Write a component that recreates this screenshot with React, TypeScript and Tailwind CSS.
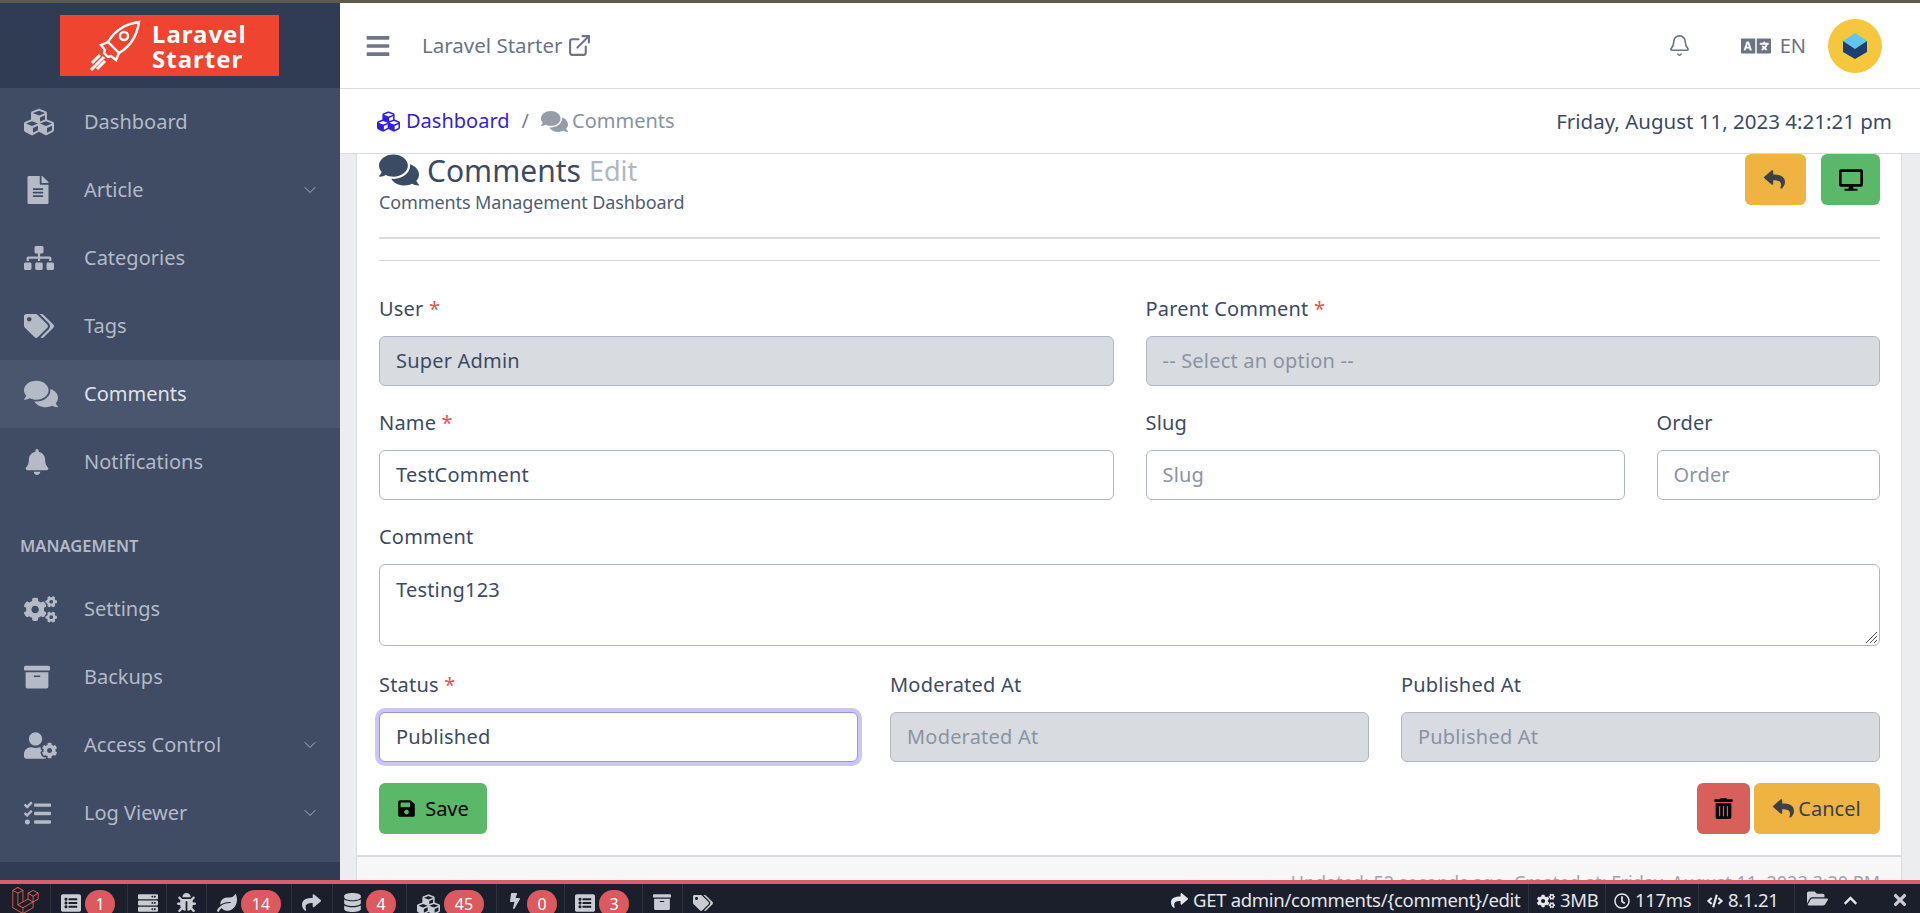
import { Bell, ChevronDown, ExternalLink } from "lucide-react";
import {
  FaArchive,
  FaBars,
  FaBell,
  FaBolt,
  FaBug,
  FaChevronUp,
  FaCode,
  FaCogs,
  FaComments,
  FaCubes,
  FaDatabase,
  FaDesktop,
  FaFileAlt,
  FaFolderOpen,
  FaLanguage,
  FaLaravel,
  FaLeaf,
  FaListAlt,
  FaRegClock,
  FaReply,
  FaSave,
  FaServer,
  FaShare,
  FaSitemap,
  FaTags,
  FaTasks,
  FaTimes,
  FaTrashAlt,
  FaUserCog,
} from "react-icons/fa";

const font = "font-['Noto_Sans',sans-serif]";

function NavItem({ icon, label, active, caret }: { icon: React.ReactNode; label: string; active?: boolean; caret?: boolean }) {
  return (
    <div className={`flex h-[68px] items-center pl-6 pr-[20px] text-[20px] text-[#b4bac6] ${active ? "bg-[#4a566e] text-[#dfe2e8]" : ""}`}>
      <span className="flex w-[60px] shrink-0 text-[#b4bac6]">{icon}</span>
      <span className="flex-1">{label}</span>
      {caret && <ChevronDown size={20} strokeWidth={1.1} />}
    </div>
  );
}

function Sidebar() {
  return (
    <aside className="flex w-[340px] shrink-0 flex-col bg-[#3f4c64]">
      <div className="flex h-[85px] shrink-0 items-start justify-start bg-[#303c54] pl-[60px] pt-3">
        <div className="flex h-[61px] w-[219px] items-center bg-[#ee4430] pl-[29px] text-white">
          <svg viewBox="0 0 52 52" className="h-[52px] w-[52px] shrink-0" fill="none" stroke="#fff" strokeWidth="2.4">
            <path d="M50 2c-14 2-24 8-31 20l-7 3 4 5-1 3 4 4 3-1 5 4 3-7C42 26 48 16 50 2z" />
            <path d="M19 22l11 11" />
            <circle cx="35" cy="16" r="4" />
            <path d="M2 50l13-13M8 49l8-8M3 43l8-8" strokeWidth="3" />
          </svg>
          <div className="ml-[11px] text-[24px] font-bold leading-[25px] tracking-[1px]">
            <div>Laravel</div>
            <div>Starter</div>
          </div>
        </div>
      </div>
      <NavItem icon={<FaCubes size={30} />} label="Dashboard" />
      <NavItem icon={<FaFileAlt size={28} />} label="Article" caret />
      <NavItem icon={<FaSitemap size={30} />} label="Categories" />
      <NavItem icon={<FaTags size={30} />} label="Tags" />
      <NavItem icon={<FaComments size={34} />} label="Comments" active />
      <NavItem icon={<FaBell size={26} />} label="Notifications" />
      <div className="flex h-[79px] shrink-0 items-center pl-5 pt-[22px] text-[16.5px] font-semibold text-[#b4bac6]">MANAGEMENT</div>
      <NavItem icon={<FaCogs size={33} />} label="Settings" />
      <NavItem icon={<FaArchive size={26} />} label="Backups" />
      <NavItem icon={<FaUserCog size={33} />} label="Access Control" caret />
      <NavItem icon={<FaTasks size={27} />} label="Log Viewer" caret />
      <div className="mt-auto h-[18px] bg-[#303c54]" />
    </aside>
  );
}

function Header() {
  return (
    <>
      <header className="flex h-[86px] shrink-0 items-center border-b border-[#d8dbe0] bg-white pl-[25px] pr-[38px] text-[#6b7385]">
        <FaBars size={26} className="text-[#6f7685]" />
        <span className="ml-[31px] text-[20.5px]">Laravel Starter</span>
        <ExternalLink size={25} className="ml-[5px]" />
        <Bell size={23} className="ml-auto" strokeWidth={1.7} />
        <FaLanguage size={30} className="ml-[50px]" />
        <span className="ml-[9px] text-[20px]">EN</span>
        <div className="ml-[22px] flex h-[54px] w-[54px] items-center justify-center rounded-full bg-[#f5c73d]">
          <svg viewBox="0 0 24 26" className="h-[28px] w-[24px]">
            <polygon points="12,0 24,8 12,16 0,8" fill="#5cc6f4" />
            <polygon points="0,8 12,16 24,8 24,19 12,26 0,19" fill="#1b3f6e" />
          </svg>
        </div>
      </header>
      <div className="flex h-[65px] shrink-0 items-center justify-between border-b border-[#d8dbe0] bg-white pl-[37px] pr-[28px] text-[20px]">
        <div className="flex items-center">
          <FaCubes size={23} className="text-[#321fdb]" />
          <span className="ml-[6px] text-[#321fdb]">Dashboard</span>
          <span className="ml-[12px] text-[#768192]">/</span>
          <FaComments size={27} className="ml-[12px] text-[#969ca8]" />
          <span className="ml-[4px] text-[#8a93a2]">Comments</span>
        </div>
        <span className="text-[20.5px] text-[#3c4b64]">Friday, August 11, 2023 4:21:21 pm</span>
      </div>
    </>
  );
}

function Field({ label, required, span, value, placeholder, disabled, focused }: { label: string; required?: boolean; span: string; value?: string; placeholder?: string; disabled?: boolean; focused?: boolean }) {
  return (
    <div className={span}>
      <label className="mb-[15px] block h-[24px] text-[20px] leading-[24px] tracking-[0.2px] text-[#3c4b64]">
        {label} {required && <span className="text-[#e55353]">*</span>}
      </label>
      <div
        className={`flex h-[50px] items-center rounded-[6px] border px-4 text-[20px] tracking-[0.2px] ${
          focused ? "border-[#998fed] bg-white shadow-[0_0_0_4px_#cbc6f3]" : disabled ? "border-[#b1b7c1] bg-[#d8dbe0]" : "border-[#b1b7c1] bg-white"
        } ${value ? "text-[#3c4b64]" : "text-[#8a93a2]"}`}
      >
        {value ?? placeholder}
      </div>
    </div>
  );
}

function CommentForm() {
  return (
    <div className="grid grid-cols-12 gap-x-8 gap-y-[25px]">
      <Field span="col-span-6" label="User" required value="Super Admin" disabled />
      <Field span="col-span-6" label="Parent Comment" required placeholder="-- Select an option --" disabled />
      <Field span="col-span-6" label="Name" required value="TestComment" />
      <Field span="col-span-4" label="Slug" placeholder="Slug" />
      <Field span="col-span-2" label="Order" placeholder="Order" />
      <div className="col-span-12 mb-[2px]">
        <label className="mb-[15px] block h-[24px] text-[20px] leading-[24px] tracking-[0.2px] text-[#3c4b64]">Comment</label>
        <div className="relative h-[82px] rounded-[6px] border border-[#b1b7c1] bg-white px-4 pt-[10px] text-[20px] tracking-[0.2px] text-[#3c4b64]">
          Testing123
          <svg viewBox="0 0 12 12" className="absolute bottom-[2px] right-[2px] h-3 w-3" stroke="#555" strokeWidth="1">
            <path d="M12 1L1 12M12 5L5 12M12 9L9 12" />
          </svg>
        </div>
      </div>
      <Field span="col-span-4" label="Status" required value="Published" focused />
      <Field span="col-span-4" label="Moderated At" placeholder="Moderated At" disabled />
      <Field span="col-span-4" label="Published At" placeholder="Published At" disabled />
    </div>
  );
}

function Content() {
  return (
    <div className="min-h-0 flex-1 overflow-hidden bg-[#ebedef] pl-4 pr-[18px]">
      <div className="-mt-[20px] border border-[#d8dbe0] bg-white">
        <div className="pb-[21px] pl-[22px] pr-[21px] pt-[19px]">
          <div className="flex h-[85px] justify-between border-b-2 border-[#d8dbe0]">
            <div>
              <div className="flex h-[34px] items-center text-[#3c4b64]">
                <FaComments size={40} className="-mt-[3px]" />
                <span className="ml-2 text-[30px] leading-[34px]">Comments</span>
                <span className="ml-2 text-[27px] leading-[34px] text-[#b1b7c1]">Edit</span>
              </div>
              <div className="mt-[2px] text-[18px] leading-[24px] tracking-[-0.1px] text-[#4f5d73]">Comments Management Dashboard</div>
            </div>
            <div className="flex items-start gap-[15px]">
              <button type="button" className="flex h-[51px] w-[61px] items-center justify-center rounded-[6px] bg-[#eeb340] pr-[3px] text-[#3c4048]">
                <FaReply size={21} />
              </button>
              <button type="button" className="flex h-[51px] w-[59px] items-center justify-center rounded-[6px] bg-[#5cb869] text-black">
                <FaDesktop size={24} />
              </button>
            </div>
          </div>
          <div className="mb-[36px] mt-[21px] h-px bg-[#d2d5da]" />
          <CommentForm />
          <div className="mt-[21px] flex justify-between">
            <button type="button" className="flex h-[51px] w-[108px] items-center justify-center gap-[9px] rounded-[6px] bg-[#5cb869] text-[20px] text-black">
              <FaSave size={19} />
              Save
            </button>
            <div className="flex gap-1">
              <button type="button" className="flex h-[51px] w-[53px] items-center justify-center rounded-[6px] bg-[#d9605a] text-black">
                <FaTrashAlt size={21} />
              </button>
              <button type="button" className="flex h-[51px] w-[126px] items-center justify-center gap-1 rounded-[6px] bg-[#eeb340] text-[20px] text-[#3c4048]">
                <FaReply size={21} />
                Cancel
              </button>
            </div>
          </div>
        </div>
        <div className="border-t-2 border-[#d8dbe0] bg-[#f7f7f8] pb-4 pr-[21px] pt-[12px] text-right text-[18px] text-[#9da5b1]">
          Updated: 52 seconds ago, Created at: Friday, August 11, 2023 3:20 PM
        </div>
      </div>
    </div>
  );
}

const debugItems = [
  { icon: <FaListAlt size={20} />, count: "1", w: "w-[77px]" },
  { icon: <FaServer size={20} />, w: "w-[39px]" },
  { icon: <FaBug size={19} />, w: "w-[40px]" },
  { icon: <FaLeaf size={20} />, count: "14", w: "w-[85px]" },
  { icon: <FaShare size={19} />, w: "w-[41px]" },
  { icon: <FaDatabase size={19} />, count: "4", w: "w-[74px]" },
  { icon: <FaCubes size={23} />, count: "45", w: "w-[90px]" },
  { icon: <FaBolt size={16} />, count: "0", w: "w-[68px]" },
  { icon: <FaListAlt size={20} />, count: "3", w: "w-[78px]" },
  { icon: <FaArchive size={18} />, w: "w-[40px]" },
  { icon: <FaTags size={20} />, w: "w-[40px]" },
];

function DebugBar() {
  return (
    <footer className="flex h-[33px] shrink-0 overflow-hidden border-t-4 border-[#dc5f65] bg-[#1a1f2b] text-[18.5px] text-[#e4e6ea]">
      <div className="flex w-[51px] shrink-0 items-start justify-center border-r border-[#2d323d] pt-[3px]">
        <FaLaravel size={27} className="text-[#e3604f]" />
      </div>
      {debugItems.map((item, i) => (
        <div key={i} className={`flex shrink-0 items-start gap-[4px] pl-[10px] pt-[9px] ${item.w} ${i < 10 ? "border-r border-[#2d323d]" : ""}`}>
          <span className="text-[#c9ccd2]">{item.icon}</span>
          {item.count && (
            <span className={`-mt-[3px] flex h-[28px] items-center justify-center rounded-full bg-[#dc5a5f] text-[16px] leading-none text-white ${item.count.length > 1 ? "w-[40px]" : "w-[30px]"}`}>{item.count}</span>
          )}
        </div>
      ))}
      <div className="ml-auto flex w-[358px] shrink-0 items-start gap-[5px] border-r border-[#2d323d] pt-[4px] leading-[24px] tracking-[-0.3px]">
        <FaShare size={17} className="mt-[4px]" /> GET admin/comments/{"{comment}"}/edit
      </div>
      <div className="flex w-[77px] shrink-0 items-start gap-[5px] border-r border-[#2d323d] pl-[8px] pt-[4px] leading-[24px] tracking-[-0.3px]">
        <FaCogs size={18} className="mt-[4px]" /> 3MB
      </div>
      <div className="flex w-[93px] shrink-0 items-start gap-[5px] border-r border-[#2d323d] pl-[8px] pt-[4px] leading-[24px] tracking-[-0.3px]">
        <FaRegClock size={16} className="mt-[5px]" /> 117ms
      </div>
      <div className="flex w-[96px] shrink-0 items-start gap-[5px] border-r border-[#2d323d] pl-[8px] pt-[4px] leading-[24px] tracking-[-0.3px]">
        <FaCode size={16} className="mt-[5px]" /> 8.1.21
      </div>
      <div className="flex w-[125px] shrink-0 items-start pl-[12px] pt-[4px]">
        <FaFolderOpen size={21} className="text-[#c9ccd2]" />
        <FaChevronUp size={15} className="ml-[15px] mt-[5px]" />
        <FaTimes size={18} className="ml-[33px] mt-[3px] text-[#c9ccd2]" />
      </div>
    </footer>
  );
}

export default function App() {
  return (
    <div className={`flex h-[913px] w-[1920px] flex-col overflow-hidden bg-white ${font}`}>
      <div className="h-[3px] shrink-0 bg-[#5c5b4e]" />
      <div className="flex min-h-0 flex-1">
        <Sidebar />
        <main className="flex min-w-0 flex-1 flex-col">
          <Header />
          <Content />
        </main>
      </div>
      <DebugBar />
    </div>
  );
}
